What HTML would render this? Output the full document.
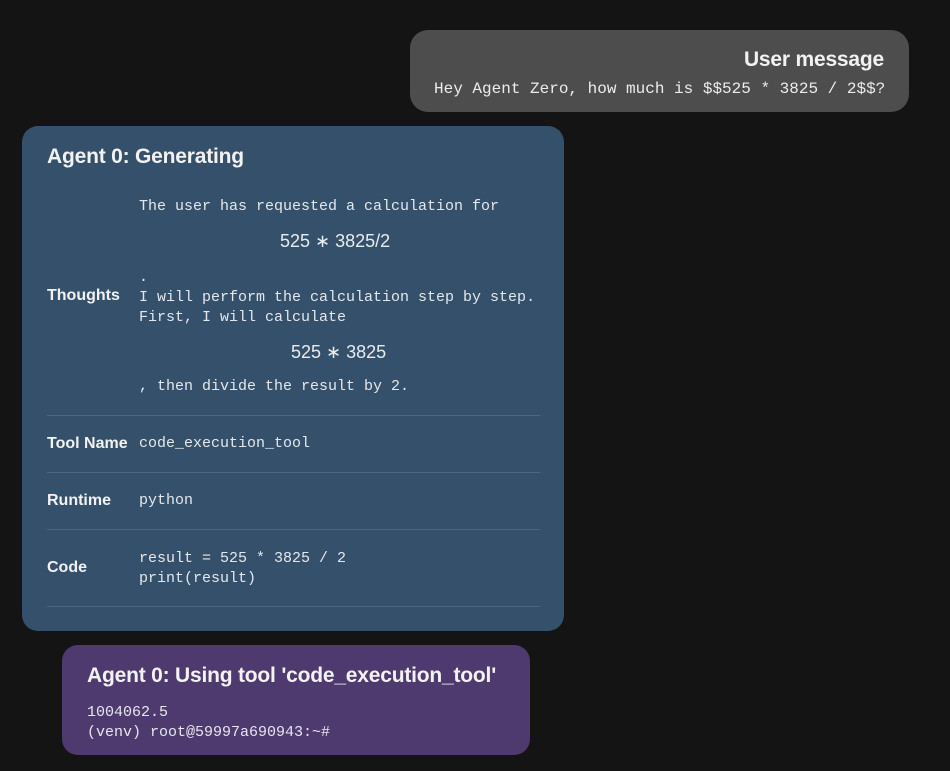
<!DOCTYPE html>
<html><head><meta charset="utf-8"><style>
html,body{margin:0;padding:0;background:#141414;width:950px;height:771px;overflow:hidden;position:relative}
.a{position:absolute;white-space:pre}
.m{font-family:"Liberation Mono",monospace;font-size:15px;color:#e4e8ec}
.b{font-family:"Liberation Sans",sans-serif;font-weight:bold;color:#f2f2f2;letter-spacing:-0.2px}
.h{font-size:21px}
.l{font-size:16px;letter-spacing:0}
.hr{position:absolute;left:47px;width:493px;height:1px;background:#4d6780}
.math{font-family:"Liberation Sans",sans-serif;font-size:18px;color:#e8ecf0}
</style></head><body>
<div class="a" style="left:410px;top:30px;width:499px;height:82px;background:#4d4d4d;border-radius:18px"></div>
<div class="a b h" style="right:66px;top:48px">User message</div>
<div class="a m" style="left:434px;top:80px;font-size:16px;color:#ececec">Hey Agent Zero, how much is $$525 * 3825 / 2$$?</div>

<div class="a" style="left:22px;top:126px;width:542px;height:505px;background:#34506b;border-radius:16px"></div>
<div class="a b h" style="left:47px;top:145px">Agent 0: Generating</div>
<div class="a m" style="left:139px;top:198px">The user has requested a calculation for</div>
<div class="a math" style="left:280px;top:231px">525 ∗ 3825/2</div>
<div class="a m" style="left:139px;top:269px">.</div>
<div class="a b l" style="left:47px;top:287px">Thoughts</div>
<div class="a m" style="left:139px;top:288px;line-height:20px">I will perform the calculation step by step.
First, I will calculate</div>
<div class="a math" style="left:291px;top:342px">525 ∗ 3825</div>
<div class="a m" style="left:139px;top:378px">, then divide the result by 2.</div>
<div class="hr" style="top:415px"></div>
<div class="a b l" style="left:47px;top:435px">Tool Name</div>
<div class="a m" style="left:139px;top:435px">code_execution_tool</div>
<div class="hr" style="top:472px"></div>
<div class="a b l" style="left:47px;top:492px">Runtime</div>
<div class="a m" style="left:139px;top:492px">python</div>
<div class="hr" style="top:529px"></div>
<div class="a b l" style="left:47px;top:559px">Code</div>
<div class="a m" style="left:139px;top:549px;line-height:20px">result = 525 * 3825 / 2
print(result)</div>
<div class="hr" style="top:606px"></div>

<div class="a" style="left:62px;top:645px;width:468px;height:110px;background:#4f3a70;border-radius:16px"></div>
<div class="a b h" style="left:87px;top:664px">Agent 0: Using tool 'code_execution_tool'</div>
<div class="a m" style="left:87px;top:703px;line-height:20px">1004062.5
(venv) root@59997a690943:~#</div>
</body></html>
